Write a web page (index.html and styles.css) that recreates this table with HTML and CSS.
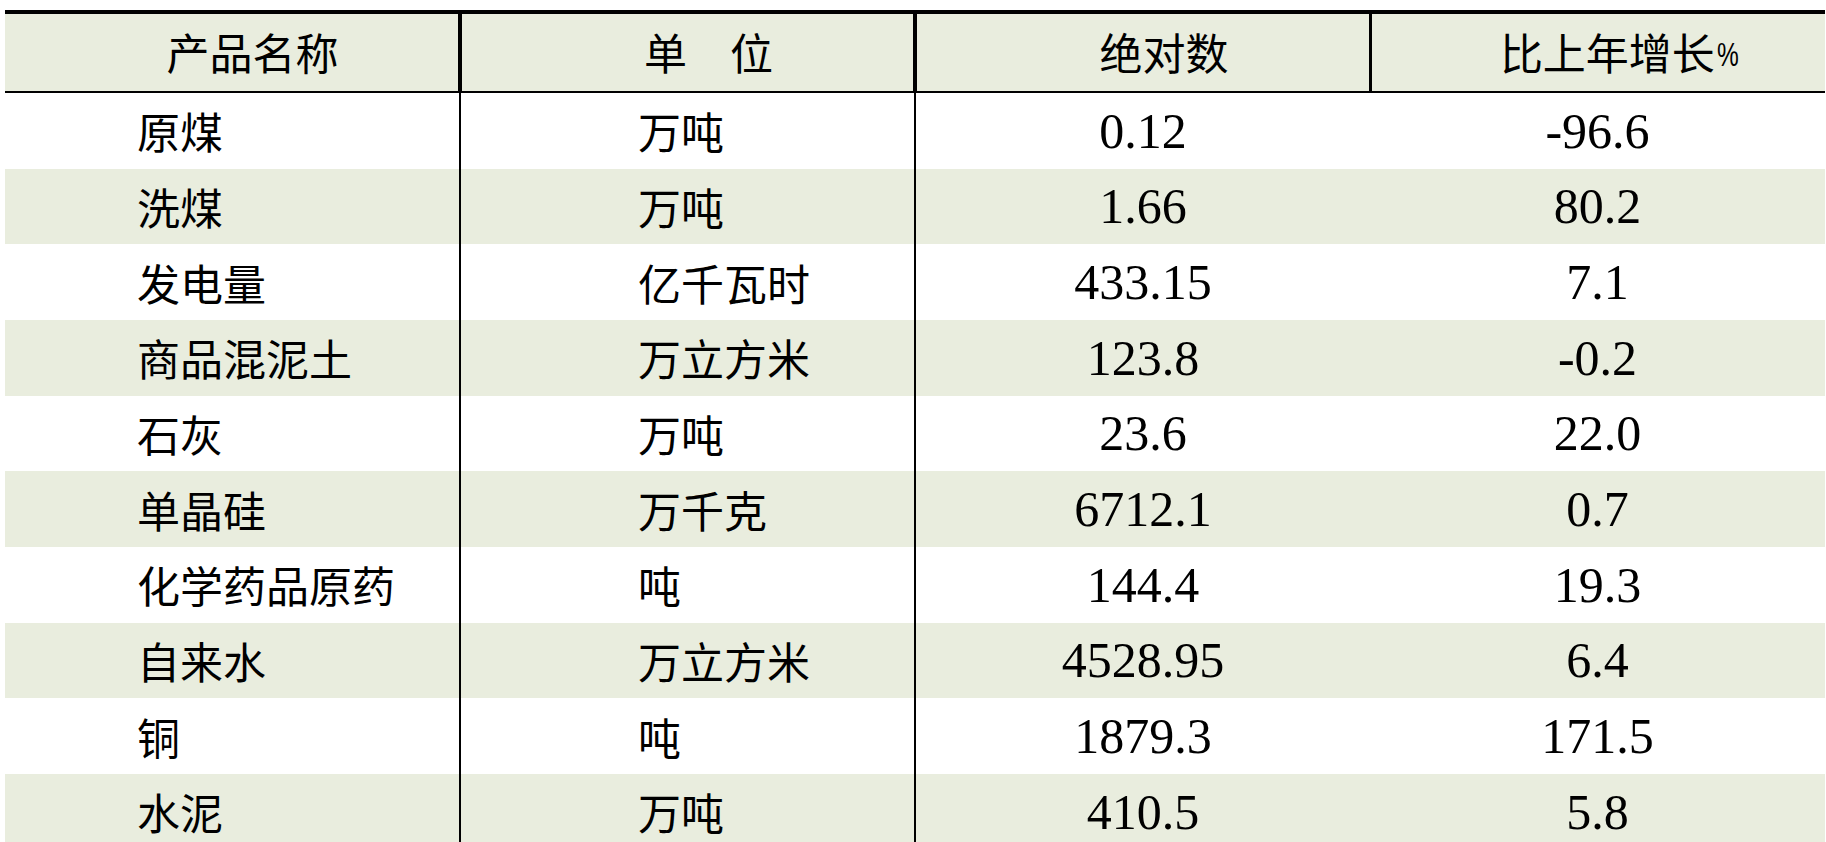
FILE: index.html
```html
<!DOCTYPE html>
<html lang="zh-CN">
<head>
<meta charset="utf-8">
<title>主要工业产品产量</title>
<link rel="stylesheet" href="styles.css">
</head>
<body>
<div class="sheet">
  <div class="row head">
    <div class="cell c1">产品名称</div>
    <div class="cell c2">单　位</div>
    <div class="cell c3">绝对数</div>
    <div class="cell c4">比上年增长<span class="pct">%</span></div>
  </div>
  <div class="row">
    <div class="cell name">原煤</div><div class="cell unit">万吨</div><div class="cell num">0.12</div><div class="cell num">-96.6</div>
  </div>
  <div class="row alt">
    <div class="cell name">洗煤</div><div class="cell unit">万吨</div><div class="cell num">1.66</div><div class="cell num">80.2</div>
  </div>
  <div class="row">
    <div class="cell name">发电量</div><div class="cell unit">亿千瓦时</div><div class="cell num">433.15</div><div class="cell num">7.1</div>
  </div>
  <div class="row alt">
    <div class="cell name">商品混泥土</div><div class="cell unit">万立方米</div><div class="cell num">123.8</div><div class="cell num">-0.2</div>
  </div>
  <div class="row">
    <div class="cell name">石灰</div><div class="cell unit">万吨</div><div class="cell num">23.6</div><div class="cell num">22.0</div>
  </div>
  <div class="row alt">
    <div class="cell name">单晶硅</div><div class="cell unit">万千克</div><div class="cell num">6712.1</div><div class="cell num">0.7</div>
  </div>
  <div class="row">
    <div class="cell name">化学药品原药</div><div class="cell unit">吨</div><div class="cell num">144.4</div><div class="cell num">19.3</div>
  </div>
  <div class="row alt">
    <div class="cell name">自来水</div><div class="cell unit">万立方米</div><div class="cell num">4528.95</div><div class="cell num">6.4</div>
  </div>
  <div class="row">
    <div class="cell name">铜</div><div class="cell unit">吨</div><div class="cell num">1879.3</div><div class="cell num">171.5</div>
  </div>
  <div class="row alt">
    <div class="cell name">水泥</div><div class="cell unit">万吨</div><div class="cell num">410.5</div><div class="cell num">5.8</div>
  </div>
</div>
</body>
</html>
```
FILE: styles.css
```css
html, body {
  margin: 0;
  padding: 0;
  background: #ffffff;
  overflow: hidden;
}

body {
  font-family: "Noto Sans CJK SC", "Liberation Sans", sans-serif;
  color: #000000;
}

.sheet {
  margin: 10px 0 0 5px;
  width: 1820px;
  border-top: 4px solid #000000;
}

.row {
  display: grid;
  grid-template-columns: 456px 455px 454px 455px;
  height: 75.67px;
}

.row.head {
  grid-template-columns: 457px 455px 455px 453px;
  height: 77px;
  background: #e9edde;
  border-bottom: 2px solid #000000;
}

.row.alt {
  background: #e9edde;
}

.cell {
  box-sizing: border-box;
  display: flex;
  align-items: center;
  font-size: 43px;
  line-height: 1;
  white-space: nowrap;
}

.head .cell {
  justify-content: center;
  padding-left: 42px;
  padding-bottom: 2px;
}

.head .c1,
.head .c2 {
  border-right: 4px solid #000000;
}

.head .c3 {
  border-right: 3px solid #000000;
}

.head .c4 {
  padding-left: 50px;
}

.pct {
  display: inline-block;
  font-family: "Liberation Sans", sans-serif;
  font-size: 34px;
  margin-left: 2px;
  margin-top: 4px;
  transform: scaleX(0.72);
  transform-origin: left center;
}

.name {
  padding-left: 132px;
  border-right: 2px solid #000000;
}

.unit {
  padding-left: 177px;
  border-right: 2px solid #000000;
}

.num {
  justify-content: center;
  font-family: "Liberation Serif", serif;
  font-size: 50px;
}
```
